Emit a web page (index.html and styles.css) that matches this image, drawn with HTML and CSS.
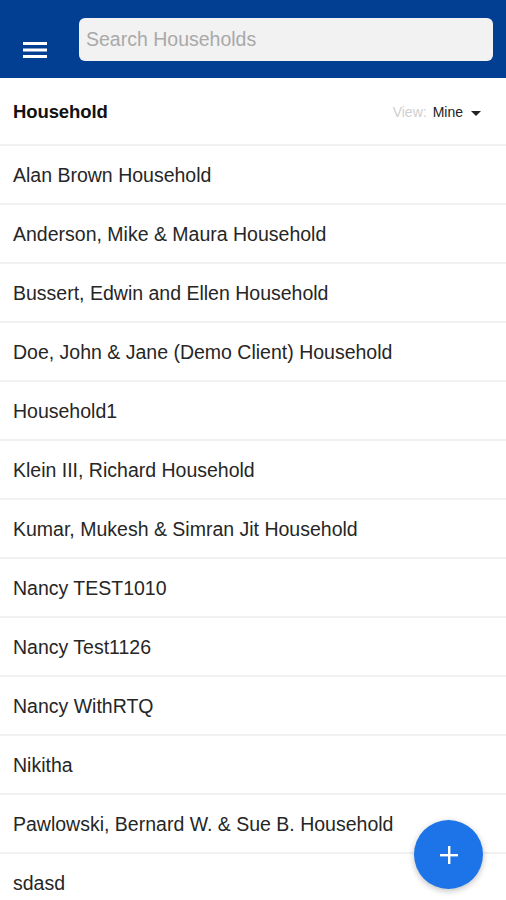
FILE: index.html
```html
<!DOCTYPE html>
<html>
<head>
<meta charset="utf-8">
<link rel="stylesheet" href="styles.css">
</head>
<body>
<header class="topbar">
  <button class="menu" aria-label="Menu">
    <svg width="24" height="16" viewBox="0 0 24 16"><rect x="0" y="0" width="24" height="3" fill="#fff"/><rect x="0" y="6.5" width="24" height="3" fill="#fff"/><rect x="0" y="13" width="24" height="3" fill="#fff"/></svg>
  </button>
  <div class="search">Search Households</div>
</header>
<div class="subhead">
  <span class="title">Household</span>
  <span class="view"><span class="view-label">View:</span> <span class="view-val">Mine</span><span class="caret"></span></span>
</div>
<ul class="list">
  <li>Alan Brown Household</li>
  <li>Anderson, Mike &amp; Maura Household</li>
  <li>Bussert, Edwin and Ellen Household</li>
  <li>Doe, John &amp; Jane (Demo Client) Household</li>
  <li>Household1</li>
  <li>Klein III, Richard Household</li>
  <li>Kumar, Mukesh &amp; Simran Jit Household</li>
  <li>Nancy TEST1010</li>
  <li>Nancy Test1126</li>
  <li>Nancy WithRTQ</li>
  <li>Nikitha</li>
  <li>Pawlowski, Bernard W. &amp; Sue B. Household</li>
  <li>sdasd</li>
</ul>
<button class="fab" aria-label="Add">
  <svg width="20" height="20" viewBox="0 0 20 20"><rect x="9" y="1" width="2.4" height="18" fill="#fff"/><rect x="1" y="9" width="18" height="2.4" fill="#fff"/></svg>
</button>
</body>
</html>
```
FILE: styles.css
```css
* { box-sizing: border-box; }
html, body { margin: 0; padding: 0; }
body {
  width: 506px;
  height: 900px;
  overflow: hidden;
  background: #fff;
  font-family: "Liberation Sans", Arial, sans-serif;
  color: #222;
}
.topbar {
  height: 78px;
  background: #023f92;
  display: flex;
  align-items: flex-start;
  padding: 18px 13px 0 23px;
  gap: 32px;
}
.menu {
  border: 0;
  background: none;
  padding: 0;
  margin-top: 24px;
  width: 24px;
  height: 16px;
  display: flex;
}
.search {
  flex: 1;
  height: 43px;
  background: #f2f2f2;
  border-radius: 6px;
  color: #a9a9a9;
  font-size: 19.5px;
  padding: 0 7px;
  display: flex;
  align-items: center;
}
.subhead {
  height: 68px;
  display: flex;
  align-items: center;
  justify-content: space-between;
  padding: 2px 25px 0 13px;
  border-bottom: 2px solid #f1f1f1;
}
.title {
  font-size: 18.5px;
  font-weight: bold;
  color: #111;
  letter-spacing: -0.1px;
}
.view { font-size: 14px; display: flex; align-items: center; }
.view-label { color: #cfcfcf; margin-right: 6px; }
.view-val { color: #222; }
.caret {
  width: 0; height: 0;
  border-left: 5px solid transparent;
  border-right: 5px solid transparent;
  border-top: 5px solid #222;
  margin-left: 8px;
  margin-top: 2px;
}
.list { list-style: none; margin: 0; padding: 0; }
.list li {
  height: 59px;
  display: flex;
  align-items: center;
  padding: 2px 13px 0;
  font-size: 19.5px;
  color: #262626;
  border-bottom: 2px solid #f1f1f1;
}
.fab {
  position: fixed;
  left: 414px;
  top: 820px;
  width: 69px;
  height: 69px;
  border-radius: 50%;
  border: 0;
  background: #1d74e8;
  box-shadow: 0 2px 6px rgba(0,0,0,0.25);
  display: flex;
  align-items: center;
  justify-content: center;
  padding: 0;
}
```
